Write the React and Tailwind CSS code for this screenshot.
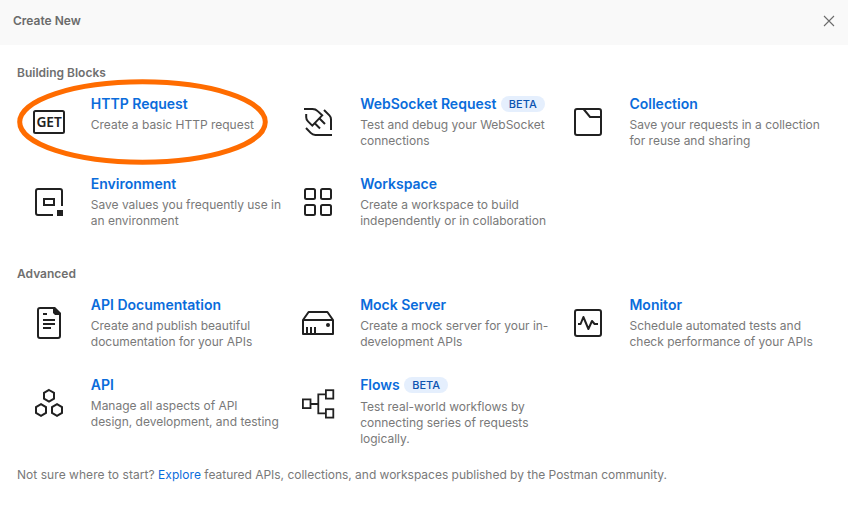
import React from "react";

function Icon({ children }) {
  return (
    <svg
      className="h-8 w-8 overflow-visible text-[#212121]"
      viewBox="0 0 32 32"
      fill="none"
      stroke="currentColor"
      strokeWidth="2"
    >
      {children}
    </svg>
  );
}

const icons = {
  get: (
    <Icon>
      <rect x="1" y="5" width="30" height="22" rx="1.5" />
      <text
        x="3.4"
        y="21"
        textLength="25.4"
        lengthAdjust="spacingAndGlyphs"
        fill="currentColor"
        stroke="none"
        className="font-['Noto_Sans','Open_Sans',sans-serif] text-[13.5px] font-semibold"
      >
        GET
      </text>
    </Icon>
  ),
  socket: (
    <Icon>
      <path d="M2 3H10.5C13 3 14.2 3.6 15.7 5.1L20.2 9.4L10.3 19.6L6 15.4C4.8 14.2 4.2 13 4.2 11.3V8" />
      <path d="M17.5 12.5L23 18M12.5 17L18 22.5" />
      <path d="M22 4L27.4 9.4C28.5 10.5 29 11.7 29 13.3V24" />
      <path d="M4 22L8.7 26.9C10 28.3 11.3 29 13.3 29H30" />
    </Icon>
  ),
  collection: (
    <Icon>
      <rect x="3" y="3" width="26" height="26" rx="2" />
      <path d="M11.5 3L18 11H29" />
    </Icon>
  ),
  environment: (
    <Icon>
      <path d="M29 20V5a2 2 0 0 0-2-2H5a2 2 0 0 0-2 2v22a2 2 0 0 0 2 2h15" />
      <rect x="11" y="13" width="10" height="6" />
      <rect x="24" y="24" width="6" height="6" fill="currentColor" stroke="none" />
    </Icon>
  ),
  workspace: (
    <Icon>
      <rect x="3" y="3" width="10" height="10" rx="1.5" />
      <rect x="19" y="3" width="10" height="10" rx="1.5" />
      <rect x="3" y="19" width="10" height="10" rx="1.5" />
      <rect x="19" y="19" width="10" height="10" rx="1.5" />
    </Icon>
  ),
  docs: (
    <Icon>
      <path d="M21 1H7a2 2 0 0 0-2 2v26a2 2 0 0 0 2 2h18a2 2 0 0 0 2-2V7Z" />
      <path d="M20 0H22L28 6V8H22L20 6Z" fill="currentColor" stroke="none" />
      <path d="M10 7h4M10 13h12M10 17h12M10 21h8" />
    </Icon>
  ),
  mock: (
    <Icon>
      <path d="M1 13L6.6 5H25.4L31 13V27H1ZM1 13H31" strokeLinejoin="round" />
      <path d="M5 20v7M9 20v7M13 20v7" />
      <circle cx="26" cy="18" r="2" fill="currentColor" stroke="none" />
    </Icon>
  ),
  monitor: (
    <Icon>
      <rect x="3" y="3" width="26" height="26" rx="2" />
      <path d="M6 17H8.6L11.4 10L16.4 22L20 14L22.6 17H26" strokeLinejoin="round" />
    </Icon>
  ),
  api: (
    <Icon>
      <path d="M16 3L21 5.9V11.7L16 14.6L11 11.7V5.9Z" />
      <path d="M8 17.2L13 20.1V25.9L8 28.8L3 25.9V20.1Z" />
      <path d="M24 17.2L29 20.1V25.9L24 28.8L19 25.9V20.1Z" />
    </Icon>
  ),
  flows: (
    <Icon>
      <g strokeWidth="1.8">
        <rect x="0.9" y="12.4" width="7.6" height="8.7" />
        <rect x="23.9" y="3.2" width="7.4" height="8.4" />
        <rect x="23.9" y="22.2" width="7.4" height="8.4" />
        <path d="M8.5 17H16.3M23.5 7.3H16.3V26.4H23.5" />
      </g>
    </Icon>
  ),
};

const sections = [
  {
    title: "Building Blocks",
    items: [
      { icon: "get", title: "HTTP Request", lines: ["Create a basic HTTP request"], circled: true },
      { icon: "socket", title: "WebSocket Request", beta: true, lines: ["Test and debug your WebSocket", "connections"] },
      { icon: "collection", title: "Collection", lines: ["Save your requests in a collection", "for reuse and sharing"] },
      { icon: "environment", title: "Environment", lines: ["Save values you frequently use in", "an environment"] },
      { icon: "workspace", title: "Workspace", lines: ["Create a workspace to build", "independently or in collaboration"] },
    ],
  },
  {
    title: "Advanced",
    items: [
      { icon: "docs", title: "API Documentation", lines: ["Create and publish beautiful", "documentation for your APIs"] },
      { icon: "mock", title: "Mock Server", lines: ["Create a mock server for your in-", "development APIs"] },
      { icon: "monitor", title: "Monitor", lines: ["Schedule automated tests and", "check performance of your APIs"] },
      { icon: "api", title: "API", lines: ["Manage all aspects of API", "design, development, and testing"] },
      { icon: "flows", title: "Flows", beta: true, lowered: true, lines: ["Test real-world workflows by", "connecting series of requests", "logically."] },
    ],
  },
];

function Item({ item }) {
  return (
    <div className="relative flex h-20 gap-[9.8px]">
      <div className="flex h-14 w-16 shrink-0 items-center justify-center">{icons[item.icon]}</div>
      <div className="whitespace-nowrap">
        <div className="flex h-5 items-center gap-[4.4px]">
          <h3 className="text-sm leading-5 font-semibold text-[#0a6cdb]">{item.title}</h3>
          {item.beta && (
            <span className="flex h-4 w-11 items-center justify-center rounded-full bg-[#e5effd] text-[11px] font-medium text-[#0b53b0]">
              BETA
            </span>
          )}
        </div>
        <p className={item.lowered ? "mt-1 text-xs leading-4" : "mt-[3px] text-xs leading-4"}>
          {item.lines.map((line) => (
            <span key={line} className="block tracking-[-0.01px]">{line}</span>
          ))}
        </p>
      </div>
      {item.circled && (
        <svg
          className="pointer-events-none absolute -top-4 left-0 h-[88px] w-[252px]"
          viewBox="0 0 252 88"
          fill="none"
        >
          <ellipse cx="125.5" cy="44" rx="122.8" ry="40.2" stroke="#ff6c00" strokeWidth="5" />
        </svg>
      )}
    </div>
  );
}

export default function App() {
  return (
    <div className="h-[521px] w-[848px] overflow-hidden bg-white font-['Inter',sans-serif] text-[#797979]">
      <header className="flex h-[45px] items-center justify-between bg-[#f9f9f9] pr-[13px] pb-[3px] pl-[13px]">
        <h1 className="text-xs font-semibold text-[#6b6b6b]">Create New</h1>
        <svg className="h-3 w-3" viewBox="0 0 12 12" fill="none" stroke="#6b6b6b" strokeWidth="1.1">
          <path d="M1 1L11 11M11 1L1 11" />
        </svg>
      </header>
      <main className="px-[17px] pt-5">
        {sections.map((section) => (
          <section key={section.title} className="mb-3">
            <h2 className="text-xs leading-4 font-semibold text-[#6f6f6f]">{section.title}</h2>
            <div className="mt-[13px] grid w-[808px] grid-cols-3">
              {section.items.map((item) => (
                <Item key={item.title} item={item} />
              ))}
            </div>
          </section>
        ))}
        <p className="text-xs leading-4">
          <span className="tracking-[0.05px]">Not sure where to start? </span>
          <a className="tracking-[0.05px] text-[#0a6cdb]">Explore</a>
          <span className="tracking-[-0.02px]">
            {" "}
            featured APIs, collections, and workspaces published by the Postman community.
          </span>
        </p>
      </main>
    </div>
  );
}
